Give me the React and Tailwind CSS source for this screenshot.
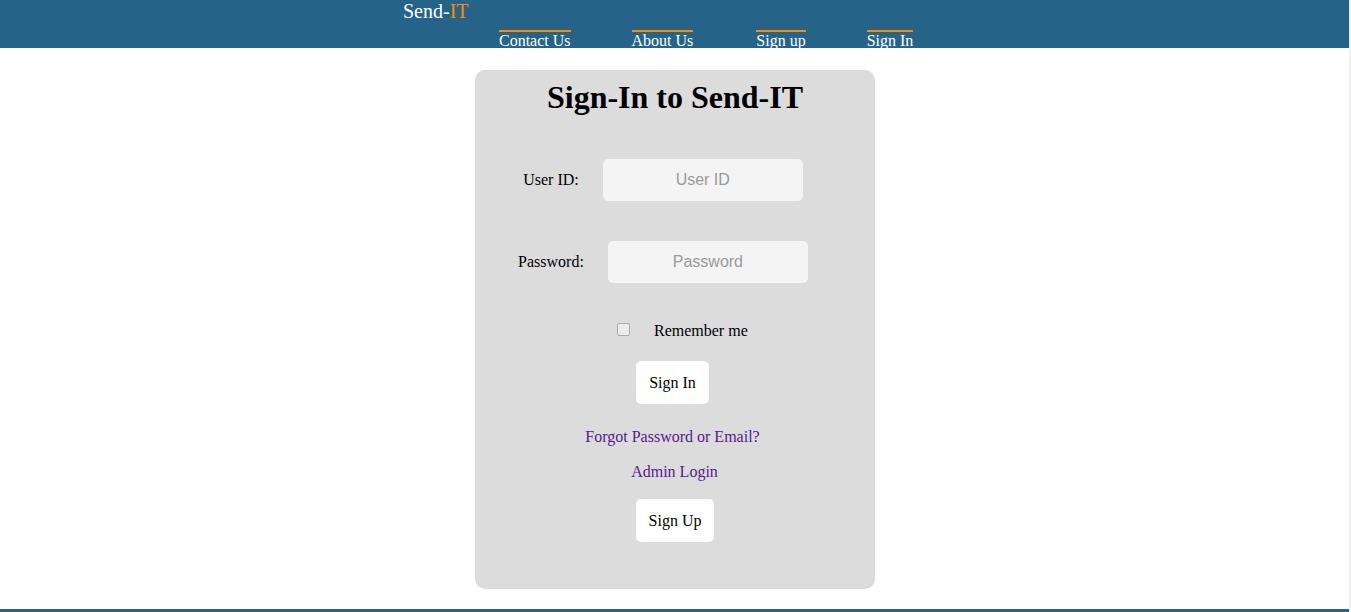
import React from "react";

export default function App() {
  const serif = { fontFamily: '"Liberation Serif", "Times New Roman", serif' };
  return (
    <div className="flex w-[1351px] h-[612px] overflow-hidden bg-white" style={serif}>
      <div className="w-[1349px] flex flex-col">
        <header className="h-[48px] shrink-0 bg-[#256389] overflow-hidden pl-[403px] flex flex-col">
          <div className="text-[20px] leading-[23px] text-white shrink-0">
            Send-<span className="text-[#ff8c00]">IT</span>
          </div>
          <nav className="flex shrink-0 mt-[7px] pl-[96px] gap-[61px] text-[16px] leading-[18px] text-white">
            <a className="border-t-2 border-[#ff8c00]">Contact Us</a>
            <a className="border-t-2 border-[#ff8c00]">About Us</a>
            <a className="border-t-2 border-[#ff8c00] ml-[2px]">Sign up</a>
            <a className="border-t-2 border-[#ff8c00]">Sign In</a>
          </nav>
        </header>
        <main className="flex shrink-0 justify-center mt-[22px] pl-[1px]">
          <div className="w-[400px] bg-[#dcdcdc] rounded-[10px] pt-[9px] pb-[47px] flex flex-col items-center text-[16px] text-black">
            <h1 className="text-[32px] font-bold leading-[37px]">Sign-In to Send-IT</h1>
            <div className="mt-[43px] flex items-center">
              <label className="mr-6">User ID:</label>
              <input
                placeholder="User ID"
                className="w-[200px] h-[42px] bg-[#f4f4f4] rounded-[5px] text-center text-[16px] outline-none placeholder:text-[#9a9a9a] mr-6"
                style={{ fontFamily: '"Liberation Sans", Arial, sans-serif' }}
              />
            </div>
            <div className="mt-[40px] flex items-center">
              <label className="mr-6">Password:</label>
              <input
                placeholder="Password"
                className="w-[200px] h-[42px] bg-[#f4f4f4] rounded-[5px] text-center text-[16px] outline-none placeholder:text-[#9a9a9a] mr-6"
                style={{ fontFamily: '"Liberation Sans", Arial, sans-serif' }}
              />
            </div>
            <div className="mt-[38px] self-stretch flex items-center pl-[142px] h-[18px]">
              <input
                type="checkbox"
                className="appearance-none w-[13px] h-[13px] m-0 -mt-[2px] border border-[#a9a9a9] rounded-[2px] bg-[#ececec]"
              />
              <span className="ml-[24px] leading-[18px] mt-[2px]">Remember me</span>
            </div>
            <button className="mt-[22px] h-[43px] px-[13px] bg-white rounded-[5px] text-[16px] -ml-[5px]">Sign In</button>
            <a className="mt-[24px] leading-[18px] text-[#551a8b] -ml-[5px]">Forgot Password or Email?</a>
            <a className="mt-[17px] leading-[18px] text-[#551a8b] -ml-[1px]">Admin Login</a>
            <button className="mt-[18px] h-[43px] px-[13px] bg-white rounded-[5px] text-[16px]">Sign Up</button>
          </div>
        </main>
        <div className="mt-[20px] h-[10px] shrink-0 bg-[#256389]" />
      </div>
      <div className="w-[2px] h-[612px] bg-[#eeeeee]" />
    </div>
  );
}
